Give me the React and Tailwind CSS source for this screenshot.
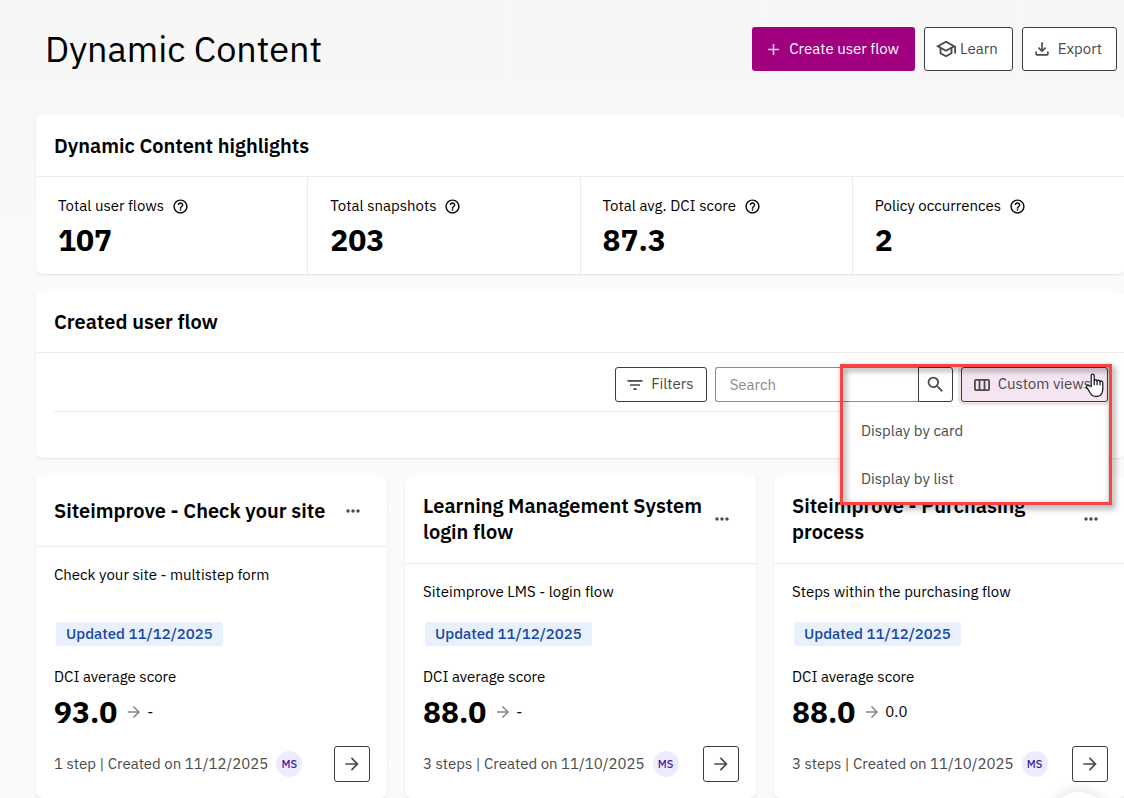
import React from "react";
import {
  MdAdd,
  MdArrowForward,
  MdFilterList,
  MdHelpOutline,
  MdMoreHoriz,
  MdOutlineFileDownload,
  MdOutlineSchool,
  MdSearch,
} from "react-icons/md";

const stats = [
  { label: "Total user flows", value: "107" },
  { label: "Total snapshots", value: "203" },
  { label: "Total avg. DCI score", value: "87.3" },
  { label: "Policy occurrences", value: "2" },
];

const flows = [
  {
    title: "Siteimprove - Check your site",
    description: "Check your site - multistep form",
    updated: "Updated 11/12/2025",
    score: "93.0",
    change: "-",
    meta: "1 step | Created on 11/12/2025",
    initials: "MS",
  },
  {
    title: "Learning Management System login flow",
    description: "Siteimprove LMS - login flow",
    updated: "Updated 11/12/2025",
    score: "88.0",
    change: "-",
    meta: "3 steps | Created on 11/10/2025",
    initials: "MS",
  },
  {
    title: "Siteimprove - Purchasing process",
    description: "Steps within the purchasing flow",
    updated: "Updated 11/12/2025",
    score: "88.0",
    change: "0.0",
    meta: "3 steps | Created on 11/10/2025",
    initials: "MS",
  },
];

const card = "rounded-md bg-white shadow-[0_1px_2px_rgba(0,0,0,0.1)]";
const outlineButton =
  "flex items-center rounded-[3px] border border-[#3d3d3d] bg-white text-[#4a4a4a]";

function ColumnsIcon() {
  return (
    <svg width="16" height="12" viewBox="0 0 16 12" fill="none" stroke="currentColor" aria-hidden="true">
      <rect x="0.9" y="0.9" width="14.2" height="10.2" rx="1" strokeWidth="1.8" />
      <path d="M5.500 1v10M10.500 1v10" strokeWidth="1.8" />
    </svg>
  );
}

function HandCursor() {
  return (
    <svg
      className="pointer-events-none absolute top-[6px] right-[3px]"
      width="20"
      height="25"
      viewBox="0 0 20 25"
      fill="#fff"
      stroke="#1f1f2e"
      strokeWidth="1.3"
      strokeLinejoin="round"
      strokeLinecap="round"
      aria-hidden="true"
    >
      <path d="M6.2 13.5V2.6c0-2.1 3-2.1 3 0v5.2c.3-1.5 2.7-1.4 2.9.2.6-1.2 2.7-.9 2.9.6.8-1.1 2.8-.6 2.8 1.2v5.7c0 5.200-2.800 8-6.700 8-3.400 0-4.900-1.600-6.300-4.300L1.700 14.400c-.9-1.900 1.300-3 2.500-1.600z" />
      <path d="M9.200 7.800v3.900M12.100 8v3.700M15 8.600v3.100" />
    </svg>
  );
}

function PageHeader() {
  return (
    <header className="flex flex-wrap items-center justify-between gap-4 pt-[27px] pr-[7px] pb-11 pl-[9px]">
      <h1 className="text-4xl leading-11 font-normal">Dynamic Content</h1>
      <div className="flex gap-[9px]">
        <button type="button" className="flex h-11 items-center gap-1.5 rounded-[3px] bg-[#a0007f] pr-4 pl-3 text-white">
          <MdAdd size={19} className="opacity-80" />
          Create user flow
        </button>
        <button type="button" className={`${outlineButton} h-11 gap-[3px] pr-3.5 pl-2.5`}>
          <MdOutlineSchool size={22} />
          Learn
        </button>
        <button type="button" className={`${outlineButton} h-11 gap-1.5 pr-3.5 pl-[9px]`}>
          <MdOutlineFileDownload size={20} />
          Export
        </button>
      </div>
    </header>
  );
}

function CardHeading({ children }) {
  return (
    <h2 className="border-b border-[#efedec] px-[18px] pt-[18px] pb-[17px] text-xl leading-[26px] font-semibold">
      {children}
    </h2>
  );
}

function Highlights() {
  return (
    <section className={card}>
      <CardHeading>Dynamic Content highlights</CardHeading>
      <dl className="grid grid-cols-4 divide-x divide-[#efedec]">
        {stats.map((s) => (
          <div key={s.label} className="px-[22px] pt-[17px] pb-4">
            <dt className="flex items-center gap-2 leading-6">
              {s.label}
              <MdHelpOutline size={17} />
            </dt>
            <dd className="mt-1 text-3xl leading-9 font-bold">{s.value}</dd>
          </div>
        ))}
      </dl>
    </section>
  );
}

function CustomViews() {
  return (
    <div className="relative">
      <button
        type="button"
        aria-haspopup="menu"
        aria-expanded="true"
        className="flex h-[35px] items-center gap-2 rounded-[3px] border border-[#3d3d3d] bg-[#f5e4f1] pr-4 pl-3 text-[#4a4a4a] shadow-[0_0_0_3px_#ece6e0]"
      >
        <ColumnsIcon />
        Custom views
      </button>
      <ul
        role="menu"
        className="absolute top-full right-0 z-10 mt-[5px] w-[265px] bg-white text-[#4a4a4a] shadow-[0_1px_4px_rgba(0,0,0,0.12)]"
      >
        {["Display by card", "Display by list"].map((item) => (
          <li key={item} role="none">
            <button type="button" role="menuitem" className="h-12 w-full px-[18px] text-left">
              {item}
            </button>
          </li>
        ))}
      </ul>
      <div className="pointer-events-none absolute -top-[3px] -right-1 z-20 h-[141px] w-[272px] border-3 border-[#fb4346] drop-shadow-[2px_3px_3px_rgba(0,0,0,0.55)]" />
      <div className="absolute top-0 right-0 z-30">
        <HandCursor />
      </div>
    </div>
  );
}

function CreatedFlows() {
  return (
    <section className={card}>
      <CardHeading>Created user flow</CardHeading>
      <div className="flex flex-wrap items-center justify-end gap-2 pt-3.5 pr-[17px] pb-[9px] pl-[18px]">
        <button type="button" className={`${outlineButton} h-[35px] gap-1.5 pr-3 pl-[9px]`}>
          <MdFilterList size={20} />
          Filters
        </button>
        <form className="flex" onSubmit={(e) => e.preventDefault()}>
          <input
            type="search"
            aria-label="Search"
            placeholder="Search"
            className="h-[35px] w-[203px] rounded-l-[3px] border border-r-0 border-[#8c8c8c] px-3.5 placeholder:text-[#8a8a8a]"
          />
          <button
            type="submit"
            aria-label="Run search"
            className="flex h-[35px] w-[35px] items-center justify-center rounded-r-[3px] border border-[#3d3d3d] text-[#4a4a4a]"
          >
            <MdSearch size={21} />
          </button>
        </form>
        <CustomViews />
      </div>
      <hr className="mx-[18px] border-[#efedec]" />
      <div className="h-[46px]" />
    </section>
  );
}

function FlowCard({ flow }) {
  return (
    <article className={`${card} flex flex-col`}>
      <div className="flex items-center justify-between border-b border-[#efedec] py-[18px] pr-[17px] pl-[18px]">
        <h3 className="text-xl leading-[26px] font-semibold">{flow.title}</h3>
        <button
          type="button"
          aria-label="More actions"
          className="flex size-[35px] shrink-0 items-center justify-center text-[#4a4a4a]"
        >
          <MdMoreHoriz size={20} />
        </button>
      </div>
      <div className="flex flex-1 flex-col py-4 pr-[17px] pl-[18px]">
        <p className="leading-6">{flow.description}</p>
        <div className="mt-auto ml-0.5 pt-[18px]">
          <span className="flex h-6 w-fit items-center rounded-[3px] bg-[#e7f0fc] px-2.5 font-medium text-[#17479e]">
            {flow.updated}
          </span>
        </div>
        <p className="mt-[19px] leading-6">DCI average score</p>
        <div className="mt-[5px] flex items-center leading-9">
          <span className="text-3xl leading-9 font-bold">{flow.score}</span>
          <MdArrowForward size={18} className="mr-1 ml-2 text-[#8a8480]" />
          <span>{flow.change}</span>
        </div>
        <div className="mt-4 flex items-center justify-between">
          <div className="flex items-center gap-2 text-[#4a4a4a]">
            {flow.meta}
            <span className="flex size-[26px] items-center justify-center rounded-full bg-[#efebfe] text-[11px] font-medium text-[#3d1f9e]">
              {flow.initials}
            </span>
          </div>
          <button
            type="button"
            aria-label="Open user flow"
            className={`${outlineButton} size-9 justify-center`}
          >
            <MdArrowForward size={20} />
          </button>
        </div>
      </div>
    </article>
  );
}

export default function App() {
  return (
    <div className="min-h-screen overflow-hidden bg-linear-to-b from-[#f7f7f7] from-10% to-[#fbfaf8] to-35% pl-9 font-['IBM_Plex_Sans','Noto_Sans',sans-serif] text-[15px] text-black">
      <PageHeader />
      <main className="-mr-px flex flex-col gap-[17px]">
        <Highlights />
        <CreatedFlows />
        <div className="grid grid-cols-3 gap-[18px]">
          {flows.map((f) => (
            <FlowCard key={f.title} flow={f} />
          ))}
        </div>
      </main>
      <button
        type="button"
        aria-label="Help"
        className="fixed right-[15px] -bottom-[54px] size-15 rounded-full bg-white shadow-[0_0_14px_rgba(0,0,0,0.14)]"
      />
    </div>
  );
}
